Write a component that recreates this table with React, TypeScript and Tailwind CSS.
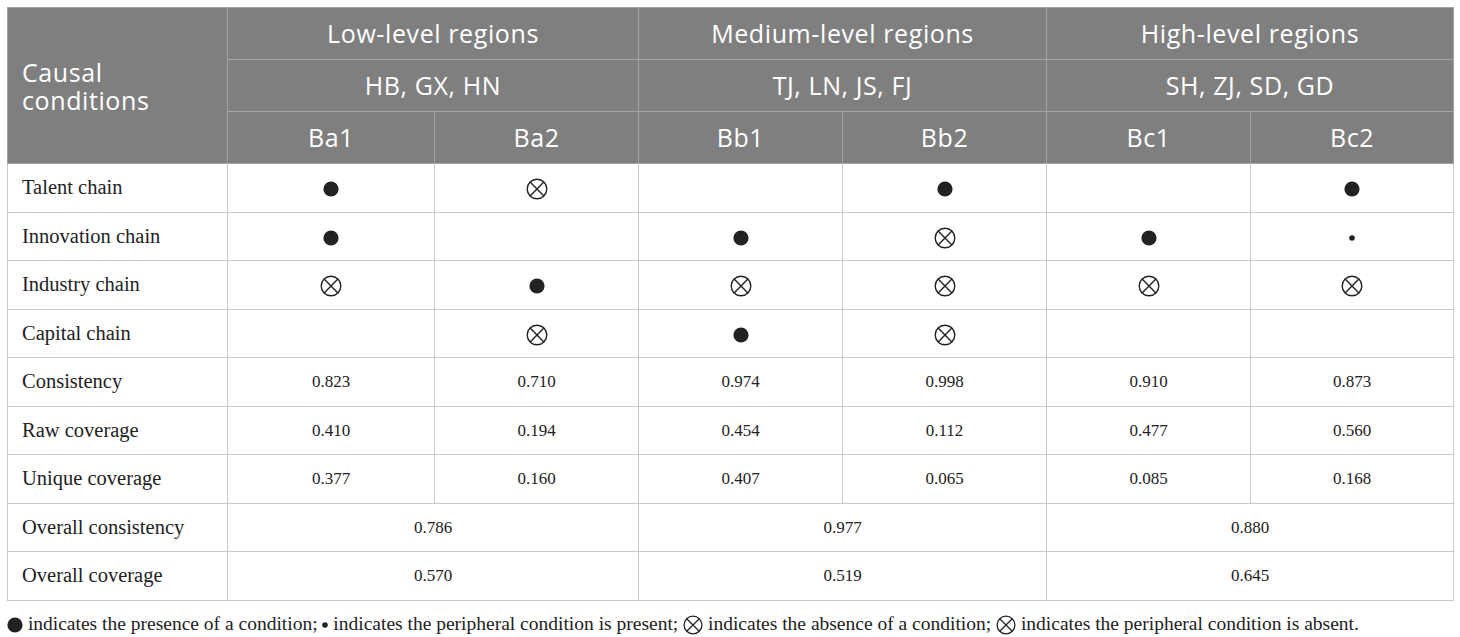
import React from 'react'

type Mark = 'core' | 'peri' | 'absent' | ''

function Sym({ kind, small }: { kind: Mark; small?: boolean }) {
  if (kind === 'core')
    return (
      <svg width="16" height="16" viewBox="0 0 16 16" className="inline-block align-middle">
        <circle cx="8" cy="8" r="7.6" fill="#222" />
      </svg>
    )
  if (kind === 'peri')
    return (
      <svg width="6" height="6" viewBox="0 0 6 6" className="inline-block align-middle">
        <circle cx="3" cy="3" r="2.8" fill="#222" />
      </svg>
    )
  if (kind === 'absent')
    return (
      <svg
        width={small ? 20 : 22}
        height={small ? 20 : 22}
        viewBox="0 0 22 22"
        className="inline-block align-middle"
      >
        <circle cx="11" cy="11" r="9.8" fill="none" stroke="#222" strokeWidth="1.4" />
        <path d="M4.1 4.1 L17.9 17.9 M17.9 4.1 L4.1 17.9" stroke="#222" strokeWidth="1.4" />
      </svg>
    )
  return null
}

const markRows: { label: string; cells: Mark[] }[] = [
  { label: 'Talent chain', cells: ['core', 'absent', '', 'core', '', 'core'] },
  { label: 'Innovation chain', cells: ['core', '', 'core', 'absent', 'core', 'peri'] },
  { label: 'Industry chain', cells: ['absent', 'core', 'absent', 'absent', 'absent', 'absent'] },
  { label: 'Capital chain', cells: ['', 'absent', 'core', 'absent', '', ''] },
]

const valueRows = [
  { label: 'Consistency', cells: ['0.823', '0.710', '0.974', '0.998', '0.910', '0.873'] },
  { label: 'Raw coverage', cells: ['0.410', '0.194', '0.454', '0.112', '0.477', '0.560'] },
  { label: 'Unique coverage', cells: ['0.377', '0.160', '0.407', '0.065', '0.085', '0.168'] },
]

const overallRows = [
  { label: 'Overall consistency', cells: ['0.786', '0.977', '0.880'] },
  { label: 'Overall coverage', cells: ['0.570', '0.519', '0.645'] },
]

const sans = "font-['Open_Sans',sans-serif]"
const serif = "font-['Liberation_Serif',serif]"

export default function App() {
  const th = `border border-[#a3a3a3] bg-[#7f7f7f] text-white text-[25px] tracking-[0.6px] font-normal h-[52px] ${sans}`
  const td = 'border border-[#c9c9c9] h-[48.5px] text-center text-[#222]'
  const lab = `border border-[#c9c9c9] h-[48.5px] pl-[14px] text-left text-[20.5px] text-[#222] ${serif}`

  return (
    <div className="w-[1460px] h-[637px] bg-white pt-[7px] pl-[7px]">
      <table className="table-fixed border-collapse w-[1446px]">
        <colgroup>
          <col className="w-[220px]" />
          <col className="w-[207px]" />
          <col className="w-[204px]" />
          <col className="w-[204px]" />
          <col className="w-[204px]" />
          <col className="w-[204px]" />
          <col className="w-[203px]" />
        </colgroup>
        <thead>
          <tr>
            <th rowSpan={3} className={`${th} text-left pl-[14px] leading-[28px] align-middle`}>
              Causal
              <br />
              conditions
            </th>
            <th colSpan={2} className={th}>Low-level regions</th>
            <th colSpan={2} className={th}>Medium-level regions</th>
            <th colSpan={2} className={th}>High-level regions</th>
          </tr>
          <tr>
            <th colSpan={2} className={th}>HB, GX, HN</th>
            <th colSpan={2} className={th}>TJ, LN, JS, FJ</th>
            <th colSpan={2} className={th}>SH, ZJ, SD, GD</th>
          </tr>
          <tr>
            {['Ba1', 'Ba2', 'Bb1', 'Bb2', 'Bc1', 'Bc2'].map((c) => (
              <th key={c} className={th}>{c}</th>
            ))}
          </tr>
        </thead>
        <tbody>
          {markRows.map((r) => (
            <tr key={r.label}>
              <td className={lab}>{r.label}</td>
              {r.cells.map((c, i) => (
                <td key={i} className={td}>
                  <Sym kind={c} />
                </td>
              ))}
            </tr>
          ))}
          {valueRows.map((r) => (
            <tr key={r.label}>
              <td className={lab}>{r.label}</td>
              {r.cells.map((c, i) => (
                <td key={i} className={`${td} text-[17px] ${serif}`}>{c}</td>
              ))}
            </tr>
          ))}
          {overallRows.map((r) => (
            <tr key={r.label}>
              <td className={lab}>{r.label}</td>
              {r.cells.map((c, i) => (
                <td key={i} colSpan={2} className={`${td} text-[17px] ${serif}`}>{c}</td>
              ))}
            </tr>
          ))}
        </tbody>
      </table>
      <p className={`mt-[10px] text-[19.5px] text-[#222] leading-[26px] whitespace-nowrap ${serif}`}>
        <Sym kind="core" /> indicates the presence of a condition; <Sym kind="peri" /> indicates the peripheral condition is present;{' '}
        <Sym kind="absent" small /> indicates the absence of a condition; <Sym kind="absent" small /> indicates the peripheral condition is absent.
      </p>
    </div>
  )
}
